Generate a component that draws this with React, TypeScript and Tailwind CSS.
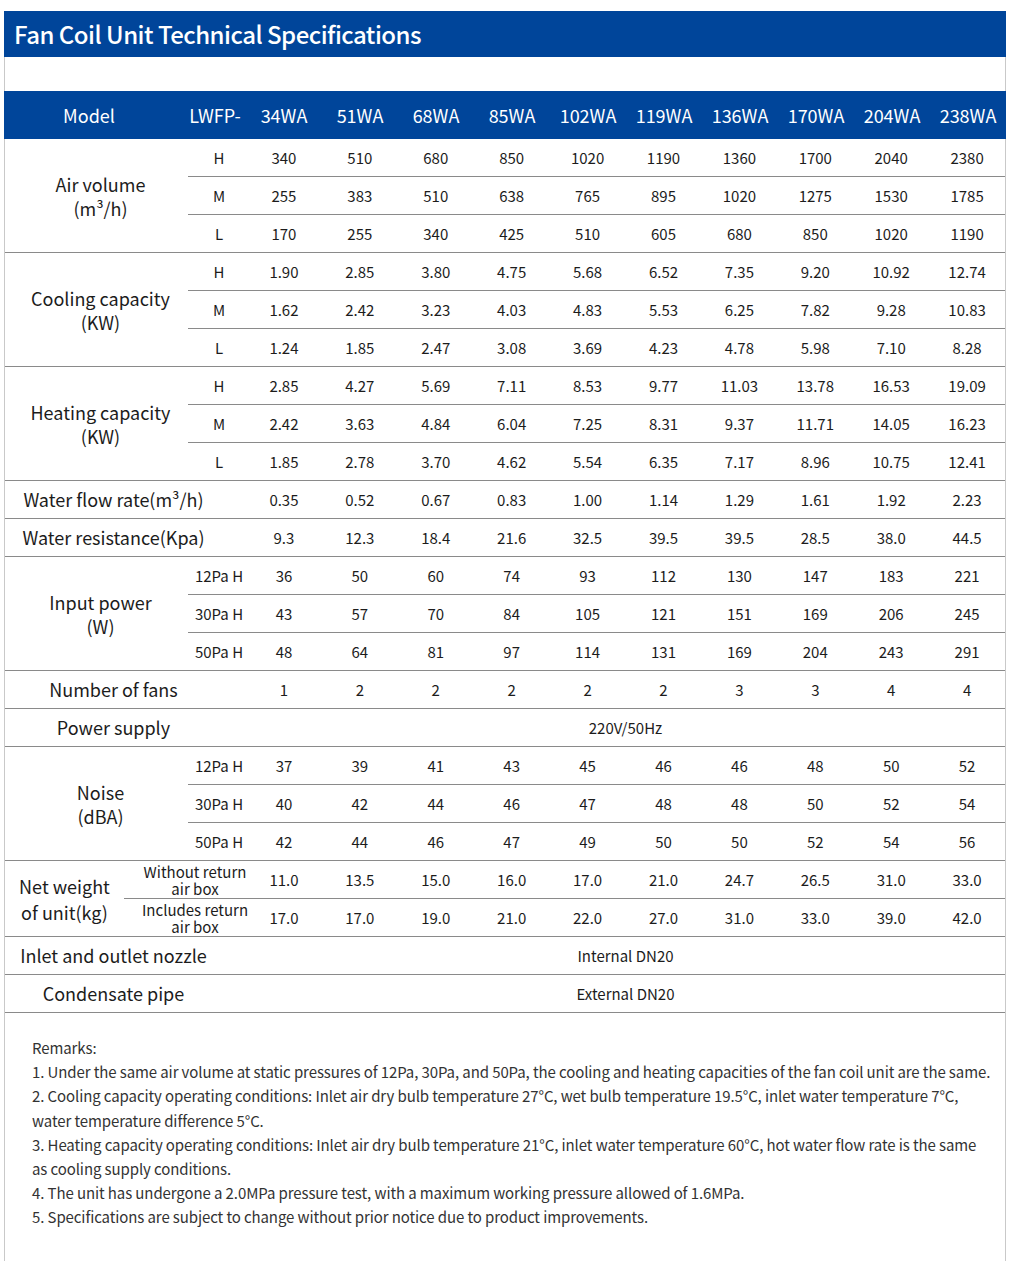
import React from 'react'

const BLUE = 'bg-[#00459a]'

const MODELS = ['34WA', '51WA', '68WA', '85WA', '102WA', '119WA', '136WA', '170WA', '204WA', '238WA']

interface SubRow {
  label: React.ReactNode
  values: string[]
}

interface Group {
  label: React.ReactNode
  labelWidth?: string
  subWidth?: string
  rows: SubRow[]
}

const groups: Group[] = [
  {
    label: (
      <>
        Air volume
        <br />
        (m³/h)
      </>
    ),
    rows: [
      { label: 'H', values: ['340', '510', '680', '850', '1020', '1190', '1360', '1700', '2040', '2380'] },
      { label: 'M', values: ['255', '383', '510', '638', '765', '895', '1020', '1275', '1530', '1785'] },
      { label: 'L', values: ['170', '255', '340', '425', '510', '605', '680', '850', '1020', '1190'] },
    ],
  },
  {
    label: (
      <>
        Cooling capacity
        <br />
        (KW)
      </>
    ),
    rows: [
      { label: 'H', values: ['1.90', '2.85', '3.80', '4.75', '5.68', '6.52', '7.35', '9.20', '10.92', '12.74'] },
      { label: 'M', values: ['1.62', '2.42', '3.23', '4.03', '4.83', '5.53', '6.25', '7.82', '9.28', '10.83'] },
      { label: 'L', values: ['1.24', '1.85', '2.47', '3.08', '3.69', '4.23', '4.78', '5.98', '7.10', '8.28'] },
    ],
  },
  {
    label: (
      <>
        Heating capacity
        <br />
        (KW)
      </>
    ),
    rows: [
      { label: 'H', values: ['2.85', '4.27', '5.69', '7.11', '8.53', '9.77', '11.03', '13.78', '16.53', '19.09'] },
      { label: 'M', values: ['2.42', '3.63', '4.84', '6.04', '7.25', '8.31', '9.37', '11.71', '14.05', '16.23'] },
      { label: 'L', values: ['1.85', '2.78', '3.70', '4.62', '5.54', '6.35', '7.17', '8.96', '10.75', '12.41'] },
    ],
  },
]

const singles1 = [
  { label: 'Water flow rate(m³/h)', values: ['0.35', '0.52', '0.67', '0.83', '1.00', '1.14', '1.29', '1.61', '1.92', '2.23'] },
  { label: 'Water resistance(Kpa)', values: ['9.3', '12.3', '18.4', '21.6', '32.5', '39.5', '39.5', '28.5', '38.0', '44.5'] },
]

const inputPower: Group = {
  label: (
    <>
      Input power
      <br />
      (W)
    </>
  ),
  rows: [
    { label: '12Pa H', values: ['36', '50', '60', '74', '93', '112', '130', '147', '183', '221'] },
    { label: '30Pa H', values: ['43', '57', '70', '84', '105', '121', '151', '169', '206', '245'] },
    { label: '50Pa H', values: ['48', '64', '81', '97', '114', '131', '169', '204', '243', '291'] },
  ],
}

const noise: Group = {
  label: (
    <>
      Noise
      <br />
      (dBA)
    </>
  ),
  rows: [
    { label: '12Pa H', values: ['37', '39', '41', '43', '45', '46', '46', '48', '50', '52'] },
    { label: '30Pa H', values: ['40', '42', '44', '46', '47', '48', '48', '50', '52', '54'] },
    { label: '50Pa H', values: ['42', '44', '46', '47', '49', '50', '50', '52', '54', '56'] },
  ],
}

const netWeight: Group = {
  label: (
    <>
      Net weight
      <br />
      of unit(kg)
    </>
  ),
  labelWidth: 'w-[119px] text-[18px] leading-[26px]',
  subWidth: 'w-[122px] pl-[20px] text-[15px] leading-[17px] whitespace-nowrap',
  rows: [
    {
      label: (
        <>
          Without return
          <br />
          air box
        </>
      ),
      values: ['11.0', '13.5', '15.0', '16.0', '17.0', '21.0', '24.7', '26.5', '31.0', '33.0'],
    },
    {
      label: (
        <>
          Includes return
          <br />
          air box
        </>
      ),
      values: ['17.0', '17.0', '19.0', '21.0', '22.0', '27.0', '31.0', '33.0', '39.0', '42.0'],
    },
  ],
}

const remarks = [
  '1. Under the same air volume at static pressures of 12Pa, 30Pa, and 50Pa, the cooling and heating capacities of the fan coil unit are the same.',
  '2. Cooling capacity operating conditions: Inlet air dry bulb temperature 27°C, wet bulb temperature 19.5°C, inlet water temperature 7°C, water temperature difference 5°C.',
  '3. Heating capacity operating conditions: Inlet air dry bulb temperature 21°C, inlet water temperature 60°C, hot water flow rate is the same as cooling supply conditions.',
  '4. The unit has undergone a 2.0MPa pressure test, with a maximum working pressure allowed of 1.6MPa.',
  '5. Specifications are subject to change without prior notice due to product improvements.',
]

function Values({ values }: { values: string[] }) {
  return (
    <>
      {values.map((v, i) => (
        <div key={i} className="flex-1 flex items-center justify-center text-[15px] pt-[2px]">
          {v}
        </div>
      ))}
    </>
  )
}

function GroupBlock({ group }: { group: Group }) {
  return (
    <div className="flex border-b border-[#8a8a8a]">
      <div
        className={`flex items-center justify-center text-center ${
          group.labelWidth ?? 'w-[183px] pl-[8px] text-[18px] leading-[24px]'
        }`}
      >
        <div>{group.label}</div>
      </div>
      <div className="flex-1 flex flex-col">
        {group.rows.map((row, i) => {
          const last = i === group.rows.length - 1
          return (
            <div key={i} className={`flex ${last ? 'h-[37px]' : 'h-[38px] border-b border-[#8a8a8a]'}`}>
              <div
                className={`flex items-center justify-center text-center ${
                  group.subWidth ?? 'w-[58px] pl-[4px] text-[15px] whitespace-nowrap pt-[2px]'
                }`}
              >
                <div>{row.label}</div>
              </div>
              <Values values={row.values} />
            </div>
          )
        })}
      </div>
    </div>
  )
}

function SingleRow({ label, values, span }: { label: string; values?: string[]; span?: string }) {
  return (
    <div className="flex h-[38px] border-b border-[#8a8a8a]">
      <div className="w-[241px] pr-[24px] flex items-center justify-center text-[18px] whitespace-nowrap">
        {label}
      </div>
      {values ? (
        <Values values={values} />
      ) : (
        <div className="flex-1 flex items-center justify-center text-[15px] pt-[2px]">{span}</div>
      )}
    </div>
  )
}

export default function App() {
  return (
    <div
      className="min-h-[1261px] bg-white text-[#1c1c1c]"
      style={{ fontFamily: '"Noto Sans CJK SC", "Noto Sans", sans-serif' }}
    >
      <div className="pt-[11px]">
        {/* Title */}
        <div className={`ml-[4px] w-[1002px] h-[46px] ${BLUE} flex items-center pl-[10px]`}>
          <h1 className="text-white text-[24px] font-medium tracking-[-0.5px]">
            Fan Coil Unit Technical Specifications
          </h1>
        </div>

        <div className="ml-[4px] w-[1002px] border-x border-[#c9c9c9] min-h-[1204px]">
          <div className="h-[34px]" />

          {/* Header */}
          <div className={`-mx-px flex h-[48px] ${BLUE} text-white text-[18px]`}>
            <div className="w-[184px] pr-[14px] flex items-center justify-center">Model</div>
            <div className="w-[58px] flex items-center justify-center pr-[4px]">LWFP-</div>
            {MODELS.map((m) => (
              <div key={m} className="flex-1 flex items-center justify-center">
                {m}
              </div>
            ))}
          </div>

          {groups.map((g, i) => (
            <GroupBlock key={i} group={g} />
          ))}
          {singles1.map((s) => (
            <SingleRow key={s.label} label={s.label} values={s.values} />
          ))}
          <GroupBlock group={inputPower} />
          <SingleRow label="Number of fans" values={['1', '2', '2', '2', '2', '2', '3', '3', '4', '4']} />
          <SingleRow label="Power supply" span="220V/50Hz" />
          <GroupBlock group={noise} />
          <GroupBlock group={netWeight} />
          <SingleRow label="Inlet and outlet nozzle" span="Internal DN20" />
          <SingleRow label="Condensate pipe" span="External DN20" />

          {/* Remarks */}
          <div className="pl-[27px] pr-[12px] pt-[23px] pb-[30px] text-[15px] leading-[24.2px] tracking-[-0.1px] text-[#333]">
            <p>Remarks:</p>
            {remarks.map((r) => (
              <p key={r}>{r}</p>
            ))}
          </div>
        </div>
      </div>
    </div>
  )
}
